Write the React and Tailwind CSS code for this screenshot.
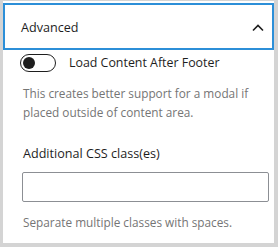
import React, { useState } from "react";

export default function App() {
  const [on, setOn] = useState(false);
  const [open, setOpen] = useState(true);

  return (
    <div className="w-[278px] h-[247px] bg-[#d4d4d4] pl-[3px] pt-[1px] pr-[4px] pb-[4px] font-['Open_Sans',sans-serif]">
      <div className="h-full bg-white flex flex-col overflow-hidden">
        <div className="pt-[2px]">
          <button
            onClick={() => setOpen(!open)}
            className="w-full h-[47px] flex items-center justify-between pl-[16px] pr-[4px] pt-[3px] border-2 border-[#2c8fd8] text-[12.6px] text-[#1e1e1e]"
          >
            <span>Advanced</span>
            <svg width="20" height="20" viewBox="0 0 20 20" fill="none">
              <path d="M5 12.5l5-5 5 5" stroke="#1e1e1e" strokeWidth="1.6" />
            </svg>
          </button>
        </div>
        {open && (
          <div className="px-[17px] pt-[4px] flex flex-col">
            <div className="flex items-center gap-[13px] h-[18px]">
              <button
                onClick={() => setOn(!on)}
                className={`w-[36px] h-[18px] rounded-full border border-[#1e1e1e] flex items-center px-[2px] ${on ? "bg-[#007cba] justify-end" : "bg-white justify-start"}`}
              >
                <span className={`w-[12px] h-[12px] rounded-full ${on ? "bg-white" : "bg-[#1e1e1e]"}`} />
              </button>
              <span className="text-[12.4px] text-[#1e1e1e]">Load Content After Footer</span>
            </div>
            <p className="mt-[12px] text-[11.8px] leading-[19px] text-[#757575] pl-[3px]">
              This creates better support for a modal if placed outside of content area.
            </p>
            <label className="mt-[22px] pl-[3px] text-[12.6px] text-[#1e1e1e] leading-[20px]">
              Additional CSS class(es)
            </label>
            <input className="mt-[8px] ml-[2px] w-[247px] h-[30px] border border-[#8c8f94] rounded-[2px] outline-none px-2 text-[13px]" />
            <p className="mt-[11px] pl-[3px] text-[11.8px] text-[#757575] leading-[18px]">
              Separate multiple classes with spaces.
            </p>
          </div>
        )}
      </div>
    </div>
  );
}
